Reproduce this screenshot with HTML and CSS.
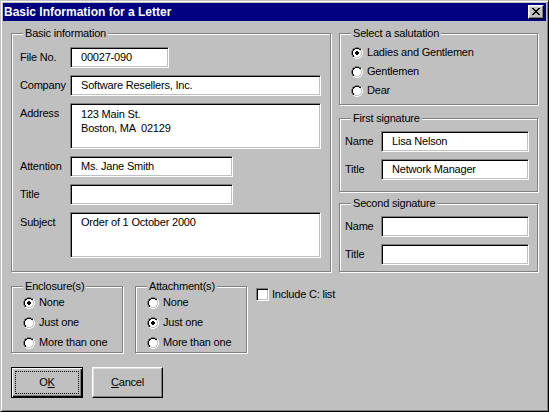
FILE: index.html
```html
<!DOCTYPE html>
<html lang="en">
<head>
<meta charset="utf-8">
<title>Basic Information for a Letter</title>
<link rel="stylesheet" href="styles.css">
</head>
<body>
<svg class="defs" width="0" height="0" aria-hidden="true">
  <defs>
    <symbol id="radio" viewBox="0 0 12 12">
      <path fill="#fff" d="M4 2h4v1h1v1h1v4h-1v1h-1v1h-4v-1h-1v-1h-1v-4h1v-1h1z"/>
      <path fill="#808080" d="M4 0h4v1h-4z M2 1h2v1h-2z M8 1h2v1h-2z M1 2h1v2h-1z M0 4h1v4h-1z M1 8h1v2h-1z"/>
      <path fill="#fff" d="M10 2h1v2h-1z M11 4h1v4h-1z M10 8h1v2h-1z M2 10h2v1h-2z M8 10h2v1h-2z M4 11h4v1h-4z"/>
      <path fill="#000" d="M4 1h4v1h-4z M2 2h2v1h-2z M8 2h2v1h-2z M2 3h1v1h-1z M1 4h1v4h-1z M2 8h1v2h-1z"/>
      <path fill="#c0c0c0" d="M9 3h1v1h-1z M10 4h1v4h-1z M9 8h1v1h-1z M3 9h1v1h-1z M8 9h2v1h-2z M4 10h4v1h-4z"/>
    </symbol>
    <symbol id="radio-on" viewBox="0 0 12 12">
      <use href="#radio"/>
      <path fill="#000" d="M5 4h2v1h1v2h-1v1h-2v-1h-1v-2h1z"/>
    </symbol>
  </defs>
</svg>

<div class="window">
  <div class="titlebar">
    <span class="title">Basic Information for a Letter</span>
    <span class="close">
      <svg width="8" height="7" viewBox="0 0 8 7" shape-rendering="crispEdges"><path fill="#000" d="M0 0h2v1h-2z M6 0h2v1h-2z M1 1h2v1h-2z M5 1h2v1h-2z M2 2h4v1h-4z M3 3h2v1h-2z M2 4h4v1h-4z M1 5h2v1h-2z M5 5h2v1h-2z M0 6h2v1h-2z M6 6h2v1h-2z"/></svg>
    </span>
  </div>

  <div class="content">
    <div class="top-row">
      <div class="group group-basic">
        <div class="legend">Basic information</div>
        <div class="form-grid">
          <div class="label">File No.</div>
          <div class="field w-99">00027-090</div>
          <div class="label">Company</div>
          <div class="field w-251">Software Resellers, Inc.</div>
          <div class="label">Address</div>
          <div class="field field-tall field-address w-251">123 Main St.
Boston, MA  02129</div>
          <div class="label">Attention</div>
          <div class="field w-163">Ms. Jane Smith</div>
          <div class="label">Title</div>
          <div class="field w-163"></div>
          <div class="label">Subject</div>
          <div class="field field-tall w-251">Order of 1 October 2000</div>
        </div>
      </div>

      <div class="right-col">
        <div class="group group-salutation">
          <div class="legend">Select a salutation</div>
          <div class="radio-list">
            <div class="radio-row"><svg class="radio" viewBox="0 0 12 12" shape-rendering="crispEdges"><use href="#radio-on"/></svg><span class="radio-text">Ladies and Gentlemen</span></div>
            <div class="radio-row"><svg class="radio" viewBox="0 0 12 12" shape-rendering="crispEdges"><use href="#radio"/></svg><span class="radio-text">Gentlemen</span></div>
            <div class="radio-row"><svg class="radio" viewBox="0 0 12 12" shape-rendering="crispEdges"><use href="#radio"/></svg><span class="radio-text">Dear</span></div>
          </div>
        </div>

        <div class="group group-sig1">
          <div class="legend">First signature</div>
          <div class="sig-grid">
            <div class="label">Name</div>
            <div class="field w-148">Lisa Nelson</div>
            <div class="label">Title</div>
            <div class="field w-148">Network Manager</div>
          </div>
        </div>

        <div class="group group-sig2">
          <div class="legend">Second signature</div>
          <div class="sig-grid">
            <div class="label">Name</div>
            <div class="field w-148"></div>
            <div class="label">Title</div>
            <div class="field w-148"></div>
          </div>
        </div>
      </div>
    </div>

    <div class="bottom-row">
      <div class="group group-small">
        <div class="legend">Enclosure(s)</div>
        <div class="radio-list radio-list-loose">
          <div class="radio-row"><svg class="radio" viewBox="0 0 12 12" shape-rendering="crispEdges"><use href="#radio-on"/></svg><span class="radio-text">None</span></div>
          <div class="radio-row"><svg class="radio" viewBox="0 0 12 12" shape-rendering="crispEdges"><use href="#radio"/></svg><span class="radio-text">Just one</span></div>
          <div class="radio-row"><svg class="radio" viewBox="0 0 12 12" shape-rendering="crispEdges"><use href="#radio"/></svg><span class="radio-text">More than one</span></div>
        </div>
      </div>

      <div class="group group-small group-attach">
        <div class="legend">Attachment(s)</div>
        <div class="radio-list radio-list-loose">
          <div class="radio-row"><svg class="radio" viewBox="0 0 12 12" shape-rendering="crispEdges"><use href="#radio"/></svg><span class="radio-text">None</span></div>
          <div class="radio-row"><svg class="radio" viewBox="0 0 12 12" shape-rendering="crispEdges"><use href="#radio-on"/></svg><span class="radio-text">Just one</span></div>
          <div class="radio-row"><svg class="radio" viewBox="0 0 12 12" shape-rendering="crispEdges"><use href="#radio"/></svg><span class="radio-text">More than one</span></div>
        </div>
      </div>

      <div class="check-row">
        <span class="checkbox"></span>
        <span class="check-text">Include C: list</span>
      </div>
    </div>

    <div class="button-row">
      <div class="btn btn-default"><span class="focus">O<u>K</u></span></div>
      <div class="btn"><span><u>C</u>ancel</span></div>
    </div>
  </div>
</div>
</body>
</html>
```

FILE: styles.css
```css
* {
  box-sizing: border-box;
}

html,
body {
  margin: 0;
  padding: 0;
  background: #c0c0c0;
}

body {
  font-family: "Liberation Sans", Arial, sans-serif;
  font-size: 11px;
  line-height: 13px;
  letter-spacing: -0.2px;
  color: #000;
}

.defs {
  display: block;
  width: 0;
  height: 0;
  overflow: hidden;
}

.window {
  width: 549px;
  height: 412px;
  background: #c0c0c0;
  border: 1px solid;
  border-color: #c0c0c0 #000 #000 #c0c0c0;
  box-shadow: inset 1px 1px 0 #fff, inset -1px -1px 0 #808080;
  padding: 2px;
  display: flex;
  flex-direction: column;
}

/* Title bar */
.titlebar {
  height: 18px;
  flex: none;
  background: #000080;
  color: #fff;
  font-weight: bold;
  font-size: 12px;
  letter-spacing: 0;
  display: flex;
  align-items: center;
  justify-content: space-between;
  padding: 0 2px 0 1px;
}

.title {
  padding-top: 1px;
  white-space: nowrap;
}

.close {
  width: 16px;
  height: 14px;
  display: block;
  background: #c0c0c0;
  border: 1px solid;
  border-color: #fff #000 #000 #fff;
  box-shadow: inset -1px -1px 0 #808080, inset 1px 1px 0 #dfdfdf;
}

.close svg {
  display: block;
  margin: 2px 0 0 3px;
}

/* Content */
.content {
  padding: 12px 0 0 8px;
}

.top-row {
  display: flex;
  gap: 8px;
  align-items: flex-start;
}

.group {
  border: 1px solid #808080;
  box-shadow: 1px 1px 0 #fff, inset 1px 1px 0 #fff;
  display: flex;
  flex-direction: column;
  align-items: flex-start;
}

.legend {
  margin: -7px 0 0 11px;
  padding: 0 2px;
  background: #c0c0c0;
  white-space: nowrap;
}

.group-basic {
  width: 320px;
  height: 239px;
}

.right-col {
  width: 199px;
  display: flex;
  flex-direction: column;
}

.group-salutation {
  height: 72px;
}

.group-sig1 {
  height: 74px;
  margin-top: 13px;
}

.group-sig2 {
  height: 69px;
  margin-top: 11px;
}

/* Form fields */
.form-grid {
  display: grid;
  grid-template-columns: 50px auto;
  row-gap: 7px;
  margin: 7px 0 0 8px;
  align-items: start;
  justify-items: start;
}

.sig-grid {
  display: grid;
  grid-template-columns: 36px 148px;
  row-gap: 7px;
  margin: 6px 0 0 5px;
  align-items: start;
  justify-items: start;
}

.label {
  padding-top: 4px;
  white-space: nowrap;
}

.field {
  height: 21px;
  background: #fff;
  border: 1px solid;
  border-color: #808080 #fff #fff #808080;
  box-shadow: inset 1px 1px 0 #000, inset -1px -1px 0 #c0c0c0;
  padding: 3px 0 0 10px;
  white-space: pre;
  overflow: hidden;
}

.field-tall {
  height: 46px;
}

.field-address {
  line-height: 14px;
}

.w-99 { width: 99px; }
.w-148 { width: 148px; }
.w-163 { width: 163px; }
.w-251 { width: 251px; }

/* Radios */
.radio-list {
  margin: 3px 0 0 11px;
  display: flex;
  flex-direction: column;
}

.radio-list-loose {
  margin-top: 0;
}

.radio-row {
  display: flex;
  align-items: flex-start;
  gap: 4px;
  height: 19px;
}

.radio-list-loose .radio-row {
  height: 20px;
}

.radio {
  width: 12px;
  height: 12px;
  display: block;
  flex: none;
  margin-top: 4px;
}

.radio-text {
  margin-top: 3px;
  white-space: nowrap;
}

/* Bottom row */
.bottom-row {
  display: flex;
  align-items: flex-start;
  margin-top: 14px;
}

.group-small {
  width: 112px;
  height: 67px;
}

.group-attach {
  margin-left: 12px;
}

.check-row {
  display: flex;
  gap: 3px;
  margin: 2px 0 0 9px;
}

.checkbox {
  width: 13px;
  height: 13px;
  display: block;
  background: #fff;
  border: 1px solid;
  border-color: #808080 #fff #fff #808080;
  box-shadow: inset 1px 1px 0 #000, inset -1px -1px 0 #c0c0c0;
}

.check-text {
  white-space: nowrap;
}

/* Buttons */
.button-row {
  display: flex;
  gap: 9px;
  margin-top: 14px;
}

.btn {
  width: 71px;
  height: 31px;
  background: #c0c0c0;
  border: 1px solid;
  border-color: #fff #000 #000 #fff;
  box-shadow: inset -1px -1px 0 #808080, inset 1px 1px 0 #dfdfdf;
  display: flex;
  align-items: center;
  justify-content: center;
}

.btn-default {
  width: 72px;
  border-color: #000;
  box-shadow: inset 1px 1px 0 #fff, inset -1px -1px 0 #000, inset -2px -2px 0 #808080;
  padding: 3px;
}

.focus {
  flex: 1;
  align-self: stretch;
  border: 1px dotted #000;
  display: flex;
  align-items: center;
  justify-content: center;
}

u {
  text-decoration: underline;
  text-underline-offset: 1px;
}
```
